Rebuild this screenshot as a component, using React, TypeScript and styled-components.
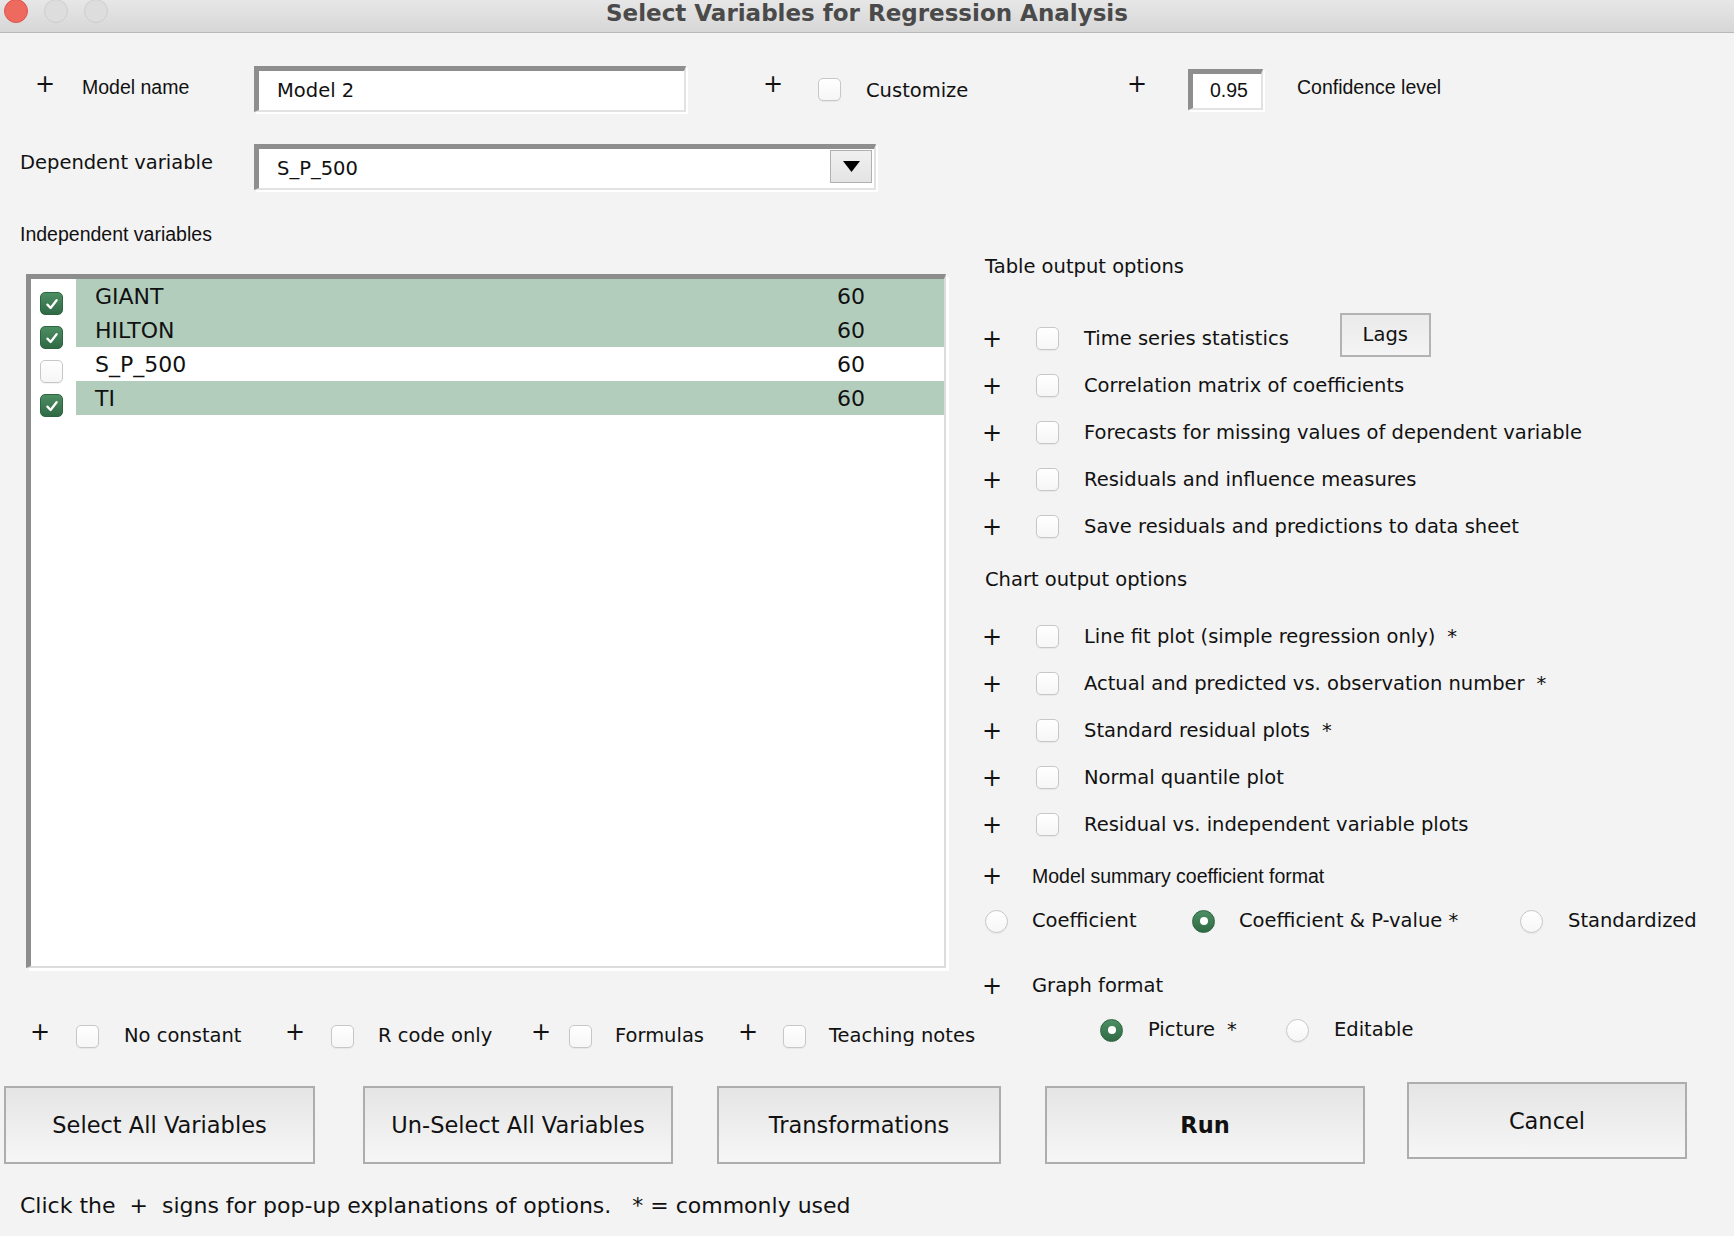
import React from "react";
import styled, { createGlobalStyle, css } from "styled-components";

const MAIN = `"DejaVu Sans", "Noto Sans", sans-serif`;
const NARROW = `"Liberation Sans", Arial, sans-serif`;

const GlobalStyle = createGlobalStyle`
  html, body { margin: 0; padding: 0; background: #f3f3f3; }
  body { font-family: ${MAIN}; color: #111; }
  * { box-sizing: border-box; }
`;

const Window = styled.div`
  width: 1734px;
  height: 1236px;
  background: #f3f3f3;
  overflow: hidden;
  display: flex;
  flex-direction: column;
`;

const TitleBar = styled.div`
  height: 33px;
  flex: none;
  display: grid;
  grid-template-columns: 1fr auto 1fr;
  align-items: start;
  background: linear-gradient(#e7e7e7, #d7d7d7);
  border-bottom: 1px solid #b8b8b8;
`;

const Lights = styled.div`
  display: flex;
  gap: 16px;
  padding-left: 4px;
  margin-top: -1px;
`;

const Light = styled.span<{ $color: string; $border: string }>`
  width: 24px;
  height: 24px;
  border-radius: 50%;
  background: ${(p) => p.$color};
  border: 1px solid ${(p) => p.$border};
`;

const Title = styled.div`
  font-family: ${MAIN};
  font-weight: bold;
  font-size: 23px;
  line-height: 27px;
  color: #4a4a4a;
  white-space: nowrap;
`;

const Row = styled.div<{ $top: number; $h?: number }>`
  display: flex;
  align-items: center;
  flex: none;
  height: ${(p) => p.$h ?? 46}px;
  margin-top: ${(p) => p.$top}px;
`;

const Plus = styled.span<{ $ml?: number; $lift?: number }>`
  flex: none;
  width: 16px;
  text-align: center;
  font-family: ${MAIN};
  font-size: 24px;
  line-height: 24px;
  color: #111;
  margin-left: ${(p) => p.$ml ?? 0}px;
  margin-bottom: ${(p) => (p.$lift ?? 0) * 2}px;
`;

const Label = styled.span<{ $w?: number; $ml?: number; $narrow?: boolean; $size?: number; $lift?: number; $drop?: number }>`
  flex: none;
  display: inline-block;
  white-space: nowrap;
  font-family: ${(p) => (p.$narrow ? NARROW : MAIN)};
  font-size: ${(p) => p.$size ?? 19.5}px;
  line-height: 24px;
  color: #111;
  margin-left: ${(p) => p.$ml ?? 0}px;
  margin-bottom: ${(p) => (p.$lift ?? 0) * 2}px;
  margin-top: ${(p) => (p.$drop ?? 0) * 2}px;
  ${(p) => (p.$w ? css`width: ${p.$w}px;` : "")}
`;

const Star = styled.span<{ $ml?: number }>`
  margin-left: ${(p) => p.$ml ?? 12}px;
`;

const Field = styled.div<{ $w: number; $h: number; $pl: number; $ml?: number }>`
  flex: none;
  display: flex;
  align-items: center;
  width: ${(p) => p.$w}px;
  height: ${(p) => p.$h}px;
  margin-left: ${(p) => p.$ml ?? 0}px;
  padding-left: ${(p) => p.$pl}px;
  background: #ffffff;
  border-top: 5px solid #8e8e8e;
  border-left: 5px solid #8e8e8e;
  border-right: 2px solid #e2e2e2;
  border-bottom: 2px solid #e2e2e2;
  box-shadow: 2px 2px 0 #ffffff;
`;

const FieldText = styled.span<{ $narrow?: boolean }>`
  font-family: ${(p) => (p.$narrow ? NARROW : MAIN)};
  font-size: 19.5px;
  color: #111;
  white-space: nowrap;
`;

const DropButton = styled.span`
  margin-left: auto;
  margin-right: 2px;
  align-self: flex-start;
  margin-top: 1px;
  width: 42px;
  height: 33px;
  display: flex;
  align-items: center;
  justify-content: center;
  background: linear-gradient(#f0f0f0, #e4e4e4);
  border: 1px solid #b0b0b0;
`;

const Box = styled.span<{ $checked?: boolean; $ml?: number }>`
  flex: none;
  display: inline-flex;
  align-items: center;
  justify-content: center;
  width: 23px;
  height: 23px;
  border-radius: 5px;
  margin-left: ${(p) => p.$ml ?? 0}px;
  ${(p) =>
    p.$checked
      ? css`
          background: linear-gradient(#4d8e63, #2f6a45);
          border: 1px solid #2d6442;
        `
      : css`
          background: linear-gradient(#ffffff, #f6f6f6);
          border: 1px solid #c7c7c7;
          box-shadow: 0 1px 1px rgba(0, 0, 0, 0.05);
        `}
`;

const RadioDot = styled.span<{ $on?: boolean }>`
  flex: none;
  display: inline-flex;
  align-items: center;
  justify-content: center;
  width: 23px;
  height: 23px;
  border-radius: 50%;
  ${(p) =>
    p.$on
      ? css`
          background: linear-gradient(#4d8e63, #2f6a45);
          border: 1px solid #2d6442;
          &::after {
            content: "";
            width: 8px;
            height: 8px;
            border-radius: 50%;
            background: #ffffff;
          }
        `
      : css`
          background: linear-gradient(#ffffff, #f6f6f6);
          border: 1px solid #c7c7c7;
          box-shadow: 0 1px 1px rgba(0, 0, 0, 0.05);
        `}
`;

const CheckMark = () => (
  <svg width="16" height="16" viewBox="0 0 16 16">
    <path d="M3.4 8.6 L6.6 12 L12.6 4.2" fill="none" stroke="#ffffff" strokeWidth="2.3" strokeLinecap="round" strokeLinejoin="round" />
  </svg>
);

const CheckBox = ({ checked, ml }: { checked?: boolean; ml?: number }) => (
  <Box $checked={checked} $ml={ml}>{checked ? <CheckMark /> : null}</Box>
);

const Main = styled.div`
  display: grid;
  grid-template-columns: 962px 1fr;
  align-items: start;
  padding-left: 20px;
  margin-top: 32px;
  flex: none;
`;

const LeftCol = styled.div`
  display: flex;
  flex-direction: column;
`;

const RightCol = styled.div`
  display: flex;
  flex-direction: column;
  padding-top: 33px;
`;

const ListBox = styled.div`
  margin-top: 28px;
  margin-left: 6px;
  width: 920px;
  height: 694px;
  background: #ffffff;
  border-top: 5px solid #8d8d8d;
  border-left: 5px solid #8d8d8d;
  border-right: 2px solid #dcdcdc;
  border-bottom: 2px solid #dcdcdc;
  box-shadow: 3px 3px 0 #ffffff;
`;

const ListRow = styled.div`
  display: grid;
  grid-template-columns: 45px 1fr;
  grid-template-rows: 34px;
  height: 34px;
`;

const CheckCell = styled.div`
  padding: 13px 0 0 9px;
`;

const ItemCell = styled.div<{ $sel: boolean }>`
  display: grid;
  grid-template-columns: 742px 1fr;
  align-items: center;
  padding-left: 19px;
  background: ${(p) => (p.$sel ? "#b3cdbd" : "transparent")};
  font-family: ${MAIN};
  font-size: 22px;
  color: #111;
`;

const BottomRow = styled.div`
  display: flex;
  align-items: center;
  height: 36px;
  margin-top: 50px;
  padding-left: 10px;
`;

const Group = styled.div<{ $w?: number }>`
  display: flex;
  align-items: center;
  flex: none;
  ${(p) => (p.$w ? css`width: ${p.$w}px;` : "")}
`;

const Header = styled.div<{ $mt?: number }>`
  height: 24px;
  line-height: 24px;
  padding-left: 3px;
  margin-top: ${(p) => p.$mt ?? 0}px;
  font-family: ${MAIN};
  font-size: 19.5px;
  color: #111;
`;

const OptionList = styled.div<{ $mt: number }>`
  display: flex;
  flex-direction: column;
  margin-top: ${(p) => p.$mt}px;
`;

const OptionRow = styled.div<{ $h?: number; $mt?: number; $pl?: number }>`
  display: flex;
  align-items: center;
  height: ${(p) => p.$h ?? 47}px;
  margin-top: ${(p) => p.$mt ?? 0}px;
  padding-left: ${(p) => p.$pl ?? 0}px;
`;

const LagsButton = styled.button`
  margin-left: 51px;
  margin-bottom: 8px;
  width: 91px;
  height: 44px;
  border: 2px solid #b3b3b3;
  background: linear-gradient(#eaeaea, #f4f4f4);
  font-family: ${MAIN};
  font-size: 19.5px;
  color: #111;
  padding: 0;
`;

const ButtonRow = styled.div`
  display: flex;
  align-items: flex-start;
  padding-left: 4px;
  margin-top: 28px;
  flex: none;
`;

const Button = styled.button<{ $w: number; $h: number; $ml: number; $mt: number; $bold?: boolean }>`
  flex: none;
  width: ${(p) => p.$w}px;
  height: ${(p) => p.$h}px;
  margin-left: ${(p) => p.$ml}px;
  margin-top: ${(p) => p.$mt}px;
  border: 2px solid #adadad;
  background: linear-gradient(#e5e5e5, #f6f6f6);
  font-family: ${MAIN};
  font-size: 22.5px;
  font-weight: ${(p) => (p.$bold ? "bold" : "normal")};
  color: #111;
  padding: 0;
`;

const Footer = styled.div`
  margin-top: 30px;
  padding-left: 20px;
  height: 24px;
  line-height: 24px;
  font-family: ${MAIN};
  font-size: 22px;
  color: #111;
  white-space: pre;
  flex: none;
`;

const variables = [
  { name: "GIANT", n: 60, sel: true },
  { name: "HILTON", n: 60, sel: true },
  { name: "S_P_500", n: 60, sel: false },
  { name: "TI", n: 60, sel: true },
];

const tableOptions = [
  "Correlation matrix of coefficients",
  "Forecasts for missing values of dependent variable",
  "Residuals and influence measures",
  "Save residuals and predictions to data sheet",
];

const chartOptions: { text: string; star?: boolean }[] = [
  { text: "Line fit plot (simple regression only)", star: true },
  { text: "Actual and predicted vs. observation number", star: true },
  { text: "Standard residual plots", star: true },
  { text: "Normal quantile plot" },
  { text: "Residual vs. independent variable plots" },
];

const bottomOptions = [
  { text: "No constant", w: 255, boxGap: 30, textGap: 25 },
  { text: "R code only", w: 246, boxGap: 30, textGap: 24 },
  { text: "Formulas", w: 207, boxGap: 22, textGap: 23 },
  { text: "Teaching notes", w: 0, boxGap: 29, textGap: 23 },
];

const buttons = [
  { text: "Select All Variables", w: 311, ml: 0, mt: 4, h: 78 },
  { text: "Un-Select All Variables", w: 310, ml: 48, mt: 4, h: 78 },
  { text: "Transformations", w: 284, ml: 44, mt: 4, h: 78 },
  { text: "Run", w: 320, ml: 44, mt: 4, h: 78, bold: true },
  { text: "Cancel", w: 280, ml: 42, mt: 0, h: 77 },
];

export default function App() {
  return (
    <>
      <GlobalStyle />
      <Window>
        <TitleBar>
          <Lights>
            <Light $color="#ee6a5e" $border="#d9554b" />
            <Light $color="#dddddd" $border="#cdcdcd" />
            <Light $color="#dddddd" $border="#cdcdcd" />
          </Lights>
          <Title>Select Variables for Regression Analysis</Title>
          <div />
        </TitleBar>

        <Row $top={33}>
          <Plus $ml={35} $lift={5}>+</Plus>
          <Label $narrow $ml={31} $w={172} $lift={2}>Model name</Label>
          <Field $w={432} $h={46} $pl={18}>
            <FieldText>Model 2</FieldText>
          </Field>
          <Plus $ml={77} $lift={5}>+</Plus>
          <CheckBox ml={39} />
          <Label $ml={25} $w={261} $drop={2}>Customize</Label>
          <Plus $lift={5}>+</Plus>
          <Field $w={75} $h={41} $pl={17} $ml={45}>
            <FieldText $narrow>0.95</FieldText>
          </Field>
          <Label $narrow $ml={34} $lift={2}>Confidence level</Label>
        </Row>

        <Row $top={32}>
          <Label $ml={20} $w={234} $lift={4}>Dependent variable</Label>
          <Field $w={622} $h={46} $pl={18}>
            <FieldText>S_P_500</FieldText>
            <DropButton>
              <svg width="17" height="11" viewBox="0 0 17 11">
                <polygon points="0,0 17,0 8.5,11" fill="#000" />
              </svg>
            </DropButton>
          </Field>
        </Row>

        <Main>
          <LeftCol>
            <Label $narrow>Independent variables</Label>
            <ListBox>
              {variables.map((v) => (
                <ListRow key={v.name}>
                  <CheckCell>
                    <CheckBox checked={v.sel} />
                  </CheckCell>
                  <ItemCell $sel={v.sel}>
                    <span>{v.name}</span>
                    <span>{v.n}</span>
                  </ItemCell>
                </ListRow>
              ))}
            </ListBox>
            <BottomRow>
              {bottomOptions.map((o) => (
                <Group key={o.text} $w={o.w || undefined}>
                  <Plus $lift={4}>+</Plus>
                  <CheckBox ml={o.boxGap} />
                  <Label $ml={o.textGap}>{o.text}</Label>
                </Group>
              ))}
            </BottomRow>
          </LeftCol>

          <RightCol>
            <Header>Table output options</Header>
            <OptionList $mt={36}>
              <OptionRow>
                <Plus>+</Plus>
                <CheckBox ml={38} />
                <Label $ml={25}>Time series statistics</Label>
                <LagsButton>Lags</LagsButton>
              </OptionRow>
              {tableOptions.map((t) => (
                <OptionRow key={t}>
                  <Plus>+</Plus>
                  <CheckBox ml={38} />
                  <Label $ml={25}>{t}</Label>
                </OptionRow>
              ))}
            </OptionList>

            <Header $mt={18}>Chart output options</Header>
            <OptionList $mt={21}>
              {chartOptions.map((o) => (
                <OptionRow key={o.text}>
                  <Plus>+</Plus>
                  <CheckBox ml={38} />
                  <Label $ml={25}>
                    {o.text}
                    {o.star ? <Star>*</Star> : null}
                  </Label>
                </OptionRow>
              ))}
            </OptionList>

            <OptionRow $h={30} $mt={13}>
              <Plus>+</Plus>
              <Label $narrow $ml={34}>Model summary coefficient format</Label>
            </OptionRow>
            <OptionRow $h={36} $mt={12} $pl={3}>
              <Group $w={207}>
                <RadioDot />
                <Label $ml={24}>Coefficient</Label>
              </Group>
              <Group $w={328}>
                <RadioDot $on />
                <Label $ml={24}>Coefficient &amp; P-value *</Label>
              </Group>
              <Group>
                <RadioDot />
                <Label $ml={25}>Standardized</Label>
              </Group>
            </OptionRow>

            <OptionRow $h={30} $mt={32}>
              <Plus>+</Plus>
              <Label $ml={34}>Graph format</Label>
            </OptionRow>
            <OptionRow $h={36} $mt={11} $pl={118}>
              <Group $w={186}>
                <RadioDot $on />
                <Label $ml={25}>
                  Picture<Star>*</Star>
                </Label>
              </Group>
              <Group>
                <RadioDot />
                <Label $ml={25}>Editable</Label>
              </Group>
            </OptionRow>
          </RightCol>
        </Main>

        <ButtonRow>
          {buttons.map((b) => (
            <Button key={b.text} $w={b.w} $h={b.h} $ml={b.ml} $mt={b.mt} $bold={b.bold}>
              {b.text}
            </Button>
          ))}
        </ButtonRow>

        <Footer>{"Click the  +  signs for pop-up explanations of options.   * = commonly used"}</Footer>
      </Window>
    </>
  );
}
